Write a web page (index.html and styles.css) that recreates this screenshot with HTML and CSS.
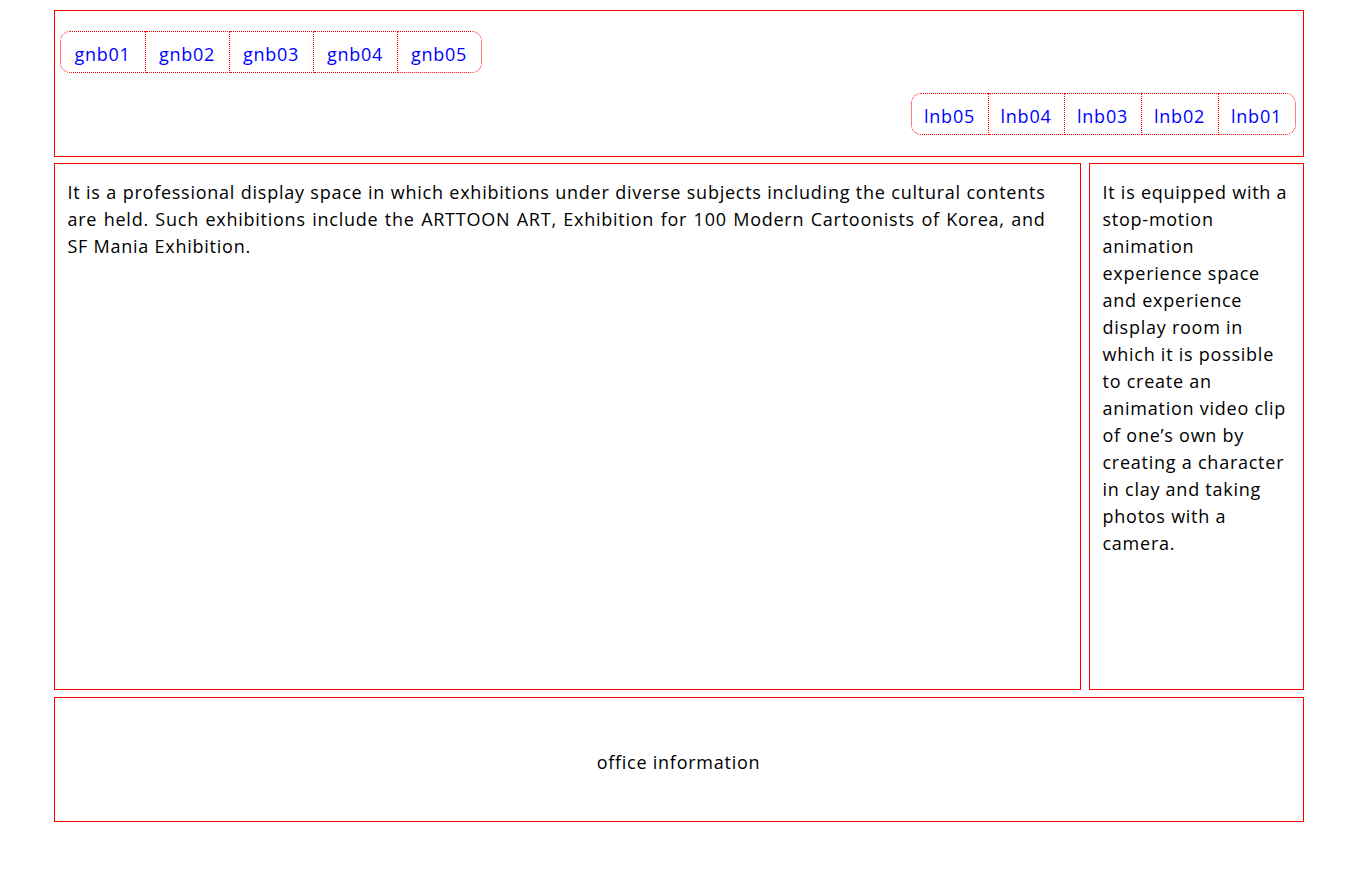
FILE: index.html
```html
<!DOCTYPE html>
<html lang="en">
<head>
<meta charset="utf-8">
<title>Layout</title>
<link rel="stylesheet" href="styles.css">
</head>
<body>
<div class="wrap">
  <header class="header">
    <ul class="gnb">
      <li><a href="#">gnb01</a></li>
      <li><a href="#">gnb02</a></li>
      <li><a href="#">gnb03</a></li>
      <li><a href="#">gnb04</a></li>
      <li><a href="#">gnb05</a></li>
    </ul>
    <ul class="lnb">
      <li><a href="#">lnb05</a></li>
      <li><a href="#">lnb04</a></li>
      <li><a href="#">lnb03</a></li>
      <li><a href="#">lnb02</a></li>
      <li><a href="#">lnb01</a></li>
    </ul>
  </header>
  <div class="middle">
    <section class="content">It is a professional display space in which exhibitions under diverse subjects including the cultural contents are held. Such exhibitions include the ARTTOON ART, Exhibition for 100 Modern Cartoonists of Korea, and SF Mania Exhibition.</section>
    <aside class="side">It is equipped with a stop-motion animation experience space and experience display room in which it is possible to create an animation video clip of one’s own by creating a character in clay and taking photos with a camera.</aside>
  </div>
  <footer class="footer">office information</footer>
</div>
</body>
</html>
```
FILE: styles.css
```css
* { box-sizing: border-box; }
html, body { margin: 0; padding: 0; background: #fff; }
body {
  font-family: "Open Sans", "Noto Sans", sans-serif;
  font-size: 18px;
  letter-spacing: 0.75px;
  color: #000;
}
.wrap {
  width: 1250px;
  margin: 0 auto;
  padding-top: 10px;
  display: flex;
  flex-direction: column;
}
.header {
  border: 1px solid red;
  height: 147px;
  padding: 20px 7px 0 5px;
  margin-bottom: 6px;
  display: flex;
  flex-direction: column;
  align-items: flex-start;
  gap: 20px;
}
.gnb, .lnb {
  list-style: none;
  margin: 0;
  padding: 0;
  display: flex;
}
.lnb { align-self: flex-end; }
.gnb li, .lnb li {
  border: 1px dotted red;
  border-left: none;
  height: 42px;
}
.gnb li:first-child, .lnb li:first-child {
  border-left: 1px dotted red;
  border-radius: 10px 0 0 10px;
}
.gnb li:last-child, .lnb li:last-child {
  border-radius: 0 10px 10px 0;
}
.gnb a, .lnb a {
  display: block;
  line-height: 40px;
  padding-top: 2px;
  height: 40px;
  color: #0000ff;
  text-decoration: none;
  text-align: center;
}
.gnb a { width: 83px; }
.gnb li:first-child a { width: 84px; }
.lnb a { width: 76px; }
.lnb li:nth-child(2) a { width: 75px; }
.content, .side {
  border: 1px solid red;
  padding: 15px 13px 14px 13px;
  line-height: 27px;
}
.middle {
  display: flex;
  gap: 8px;
  height: 527px;
  margin-bottom: 7px;
}
.content {
  flex: 1;
  text-align: justify;
  padding-right: 34px;
}
.side {
  width: 215px;
  flex-shrink: 0;
}
.footer {
  border: 1px solid red;
  height: 125px;
  display: flex;
  align-items: center;
  justify-content: center;
  padding-top: 5px;
}
```
